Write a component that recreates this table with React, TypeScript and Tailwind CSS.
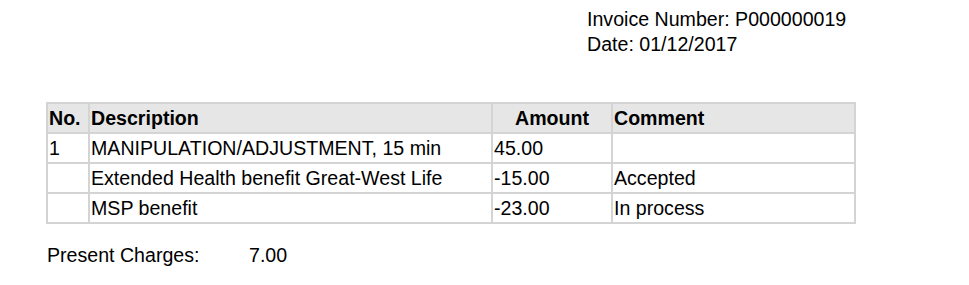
export default function App() {
  const rows = [
    { no: "1", desc: "MANIPULATION/ADJUSTMENT, 15 min", amt: "45.00", com: "" },
    { no: "", desc: "Extended Health benefit Great-West Life", amt: "-15.00", com: "Accepted" },
    { no: "", desc: "MSP benefit", amt: "-23.00", com: "In process" },
  ];
  const cell = "border border-[#d4d4d4] px-[1px] py-0 h-[30px] align-middle whitespace-nowrap";
  return (
    <div className="bg-white w-[969px] h-[285px] text-black text-[19.6px] leading-[22px]" style={{ fontFamily: '"Liberation Sans", Arial, sans-serif' }}>
      <div className="pt-[7px] pl-[587px] leading-[25px]">
        <div>Invoice Number: P000000019</div>
        <div>Date: 01/12/2017</div>
      </div>
      <table className="ml-[46px] mt-[45px] w-[810px] border-separate border-spacing-0 border border-[#d4d4d4] table-fixed">
        <colgroup>
          <col className="w-[42px]" />
          <col className="w-[403px]" />
          <col className="w-[120px]" />
          <col className="w-[243px]" />
        </colgroup>
        <thead>
          <tr className="bg-[#e6e6e6]">
            <th className={`${cell} text-left font-bold`}>No.</th>
            <th className={`${cell} text-left font-bold`}>Description</th>
            <th className={`${cell} text-center font-bold`}>Amount</th>
            <th className={`${cell} text-left font-bold`}>Comment</th>
          </tr>
        </thead>
        <tbody>
          {rows.map((r, i) => (
            <tr key={i}>
              <td className={cell}>{r.no}</td>
              <td className={cell}>{r.desc}</td>
              <td className={cell}>{r.amt}</td>
              <td className={cell}>{r.com}</td>
            </tr>
          ))}
        </tbody>
      </table>
      <div className="flex mt-[20px] ml-[47px]">
        <div className="w-[202px]">Present Charges:</div>
        <div>7.00</div>
      </div>
    </div>
  );
}
